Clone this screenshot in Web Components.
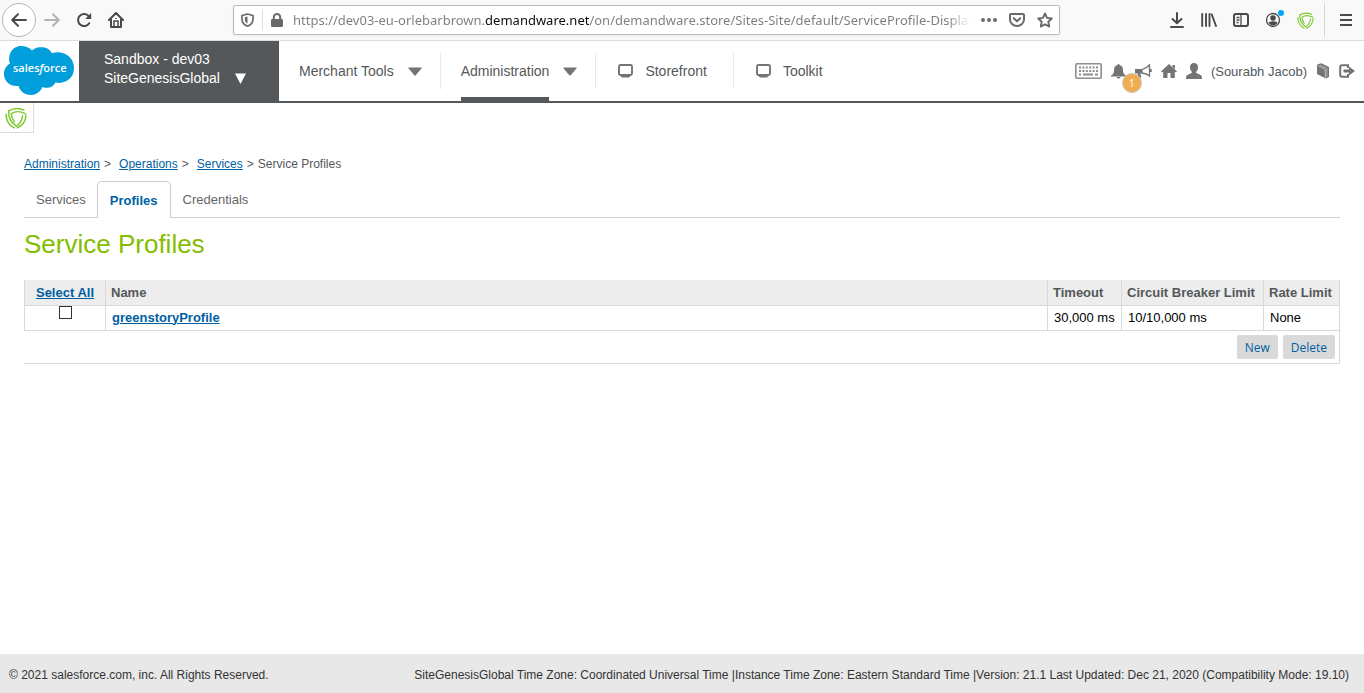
<!DOCTYPE html>
<html lang="en">
<head>
<meta charset="utf-8">
<title>Service Profiles</title>
<style>
body { margin: 0; font-family: "Liberation Sans", Arial, sans-serif; font-size: 13px; color: #54585a; background: #fff; }
</style>
</head>
<body>
<bm-app></bm-app>
<script>
const define = (name, html, setup) => {
  const template = document.createElement('template');
  template.innerHTML = html;
  customElements.define(name, class extends HTMLElement {
    constructor() {
      super();
      this.attachShadow({ mode: 'open' }).append(template.content.cloneNode(true));
    }
    connectedCallback() { if (setup) setup(this, this.shadowRoot); }
  });
};

const shield = '<g fill="none" stroke="#7ac928" stroke-width="1.300" stroke-linecap="round"><path d="M3.200 3.600C8 .8 13 .8 17.200 2.800"/><path d="M3.400 3.800C3 9.500 5.500 14 9.800 17"/><path d="M5.800 6C9.500 3.600 14 3.800 18.200 6"/><path d="M19 7C19 12 16.500 16.500 11.200 19"/><path d="M1 6.500C1 12 3.500 16.500 8.300 19"/><path d="M16 8C15.500 12 13.500 15 10.500 17.500"/><path d="M5.800 6.500C6 9.500 7 11.500 8.500 13.500"/></g>';

/* name: [width, height, viewBox, markup] */
const icons = {
  back: [16, 14, '0 0 16 14', '<path d="M15 7H1.500M7 1.200 1.200 7 7 12.800" fill="none" stroke="currentColor" stroke-width="2" stroke-linecap="round" stroke-linejoin="round"/>'],
  forward: [16, 14, '0 0 16 14', '<path d="M1 7h13.500M9 1.200 14.800 7 9 12.800" fill="none" stroke="currentColor" stroke-width="2" stroke-linecap="round" stroke-linejoin="round"/>'],
  reload: [16, 16, '0 0 16 16', '<path d="M13.200 11.200A6 6 0 1 1 12.300 3.800L14 5.500" fill="none" stroke="currentColor" stroke-width="2" stroke-linecap="round"/><path d="M15.200 1v6H9.200z" fill="currentColor"/>'],
  house: [16, 16, '0 0 16 16', '<path d="M1 8 8 1l7 7M3 7v8h10V7" fill="none" stroke="currentColor" stroke-width="2" stroke-linecap="round" stroke-linejoin="round"/><path d="M6 15V9h4v6M8 6v1" fill="none" stroke="currentColor" stroke-width="1.500"/>'],
  tracking: [13, 14, '0 0 13 14', '<path d="M6.500 1 12 2.500V6c0 3.500-2.200 6-5.500 7.200C3.200 12 1 9.500 1 6V2.500z" fill="none" stroke="currentColor" stroke-width="1.700" stroke-linejoin="round"/><path d="M6.500 3.500v7C4.500 9.500 3.800 8 3.800 6V4.200z" fill="currentColor"/>'],
  lock: [12, 14, '0 0 12 14', '<path d="M2.800 7V4.200a3.200 3.200 0 0 1 6.400 0V7" fill="none" stroke="currentColor" stroke-width="2"/><rect y="6" width="12" height="8" rx="1.200" fill="currentColor"/>'],
  dots: [16, 4, '0 0 16 4', '<g fill="currentColor"><circle cx="2" cy="2" r="2"/><circle cx="8" cy="2" r="2"/><circle cx="14" cy="2" r="2"/></g>'],
  pocket: [16, 14, '0 0 16 14', '<path d="M2 1h12q1 0 1 1v4.500a7 6.500 0 0 1-14 0V2q0-1 1-1z" fill="none" stroke="currentColor" stroke-width="2"/><path d="m4.800 5.200 3.200 3 3.200-3" fill="none" stroke="currentColor" stroke-width="2" stroke-linecap="round" stroke-linejoin="round"/>'],
  star: [16, 16, '0 0 16 16', '<path d="m8 1.500 2 4.400 4.800.6-3.500 3.300.9 4.800L8 12.200l-4.200 2.400.9-4.800L1.200 6.500 6 5.900z" fill="none" stroke="currentColor" stroke-width="1.900" stroke-linejoin="round"/>'],
  download: [14, 16, '0 0 14 16', '<path d="M7 1v10M2.500 7 7 11.300 11.500 7M1 15h12" fill="none" stroke="currentColor" stroke-width="2" stroke-linecap="round" stroke-linejoin="round"/>'],
  library: [16, 14, '0 0 16 14', '<path d="M1.200 1v12M5 1v12M8.500 1v12M10.800 1.500l4.200 11.500" fill="none" stroke="currentColor" stroke-width="1.900" stroke-linecap="round"/>'],
  sidebar: [16, 14, '0 0 16 14', '<rect x="1" y="1" width="14" height="12" rx="2" fill="none" stroke="currentColor" stroke-width="2"/><path d="M8 1v12M3.500 4.500h3M3.500 7h3M3.500 9.500h2" stroke="currentColor" stroke-width="1.300"/>'],
  account: [20, 18, '0 0 20 18', '<circle cx="8" cy="10" r="6.500" fill="none" stroke="currentColor" stroke-width="1.300"/><circle cx="8" cy="8" r="2.800" fill="currentColor"/><path d="M3.500 12.500q4.500-2.500 9 0Q11 15.500 8 15.500t-4.500-3z" fill="currentColor"/><circle cx="16" cy="3" r="3" fill="#00a8f5"/>'],
  menu: [12, 12, '0 0 12 12', '<path d="M0 1h12M0 6h12M0 11h12" stroke="currentColor" stroke-width="2"/>'],
  shield: [17, 17, '0 0 20 20', shield],
  shieldLarge: [22, 22, '0 0 20 20', shield],
  caret: [14, 9, '0 0 14 9', '<path d="M1 .5h12q1 0 .4.900L7.700 8.300q-.7.700-1.400 0L.6 1.400Q0 .5 1 .5z" fill="currentColor"/>'],
  caretWhite: [11, 11, '0 0 11 11', '<path d="M0 .5h11L5.500 11z" fill="#fff"/>'],
  screen: [15, 14, '0 0 15 14', '<rect x="1" y="1" width="13" height="10" rx="1.500" fill="none" stroke="currentColor" stroke-width="1.900"/><path d="M1 10h13l-1.500 2L11 13.500H4L2.500 12z" fill="currentColor"/>'],
  keyboard: [27, 16, '0 0 27 16', '<rect x=".8" y=".8" width="25.400" height="14.400" rx="1" fill="none" stroke="#8e8e8e" stroke-width="1.600"/><path d="M4 4.500h19M4 8h19" stroke="#8e8e8e" stroke-width="2" stroke-dasharray="2 1.400"/><path d="M4 11.500h2M8 11.500h10M20 11.500h3" stroke="#8e8e8e" stroke-width="2"/>'],
  bell: [15, 15, '0 0 15 15', '<path d="M7.500 0c.7 0 1 .4 1 1.100C11 1.700 12 3.600 12 6c0 3 .8 4.500 3 5.500v1H0v-1C2.200 10.500 3 9 3 6c0-2.400 1-4.300 3.500-4.900C6.500.4 6.800 0 7.500 0zM5.500 13h4q-.3 1.500-2 1.500t-2-1.500z" fill="currentColor"/>'],
  horn: [17, 15, '0 0 17 15', '<path d="M0 5h7v4.500H5.200L6.500 13.500l-2.800.5L2.500 9.500H0z" fill="currentColor"/><path d="M7 5.500Q12 4 14.500 1v11Q12 9.500 7 9z" fill="none" stroke="currentColor" stroke-width="1.300"/><path d="M15.800 5v3" stroke="currentColor" stroke-width="1.800"/>'],
  home: [16, 14, '0 0 16 14', '<path d="M8 0 16 7.500 15 8.600l-1.200-1V14H9.500V9h-3v5H2.200V7.600L1 8.600 0 7.500zM11.500 1H14v4l-2.500-2.300z" fill="currentColor"/>'],
  user: [16, 16, '0 0 16 16', '<path d="M8 0c2.700 0 4 1.700 4 4.200C12 6.500 11 8 9.900 9c-.3 1.600 5.300 2 6 4.800V16H.1v-2.200C.8 11 6.400 10.600 6.100 9 5 8 4 6.500 4 4.200 4 1.700 5.300 0 8 0z" fill="currentColor"/>'],
  book: [12, 16, '0 0 12 16', '<path d="M0 2.500Q.2 1.200 1.500 1L4.500.2 12 4v10L8.800 15.500 0 11z" fill="currentColor"/><path d="M1.200 2.700 8.300 6.200v8.500" fill="none" stroke="#d8d8d8" stroke-width=".8"/><path d="M3 2 10 5.300v8.500" fill="none" stroke="#bbb" stroke-width=".7"/>'],
  exit: [16, 14, '0 0 16 14', '<path d="M9 4V1.200H3Q1.200 1.200 1.200 3v8q0 1.800 1.800 1.800h6V10" fill="none" stroke="currentColor" stroke-width="2"/><path d="M4.500 5.500H10V2.500L16 7l-6 4.500v-3H4.500z" fill="currentColor"/>'],
};

define('bm-icon', '<style>:host{display:block;flex:none}svg{display:block}</style>', (el, root) => {
  if (root.querySelector('svg')) return;
  const [w, h, box, body] = icons[el.getAttribute('name')];
  root.innerHTML += `<svg width="${w}" height="${h}" viewBox="${box}" aria-hidden="true">${body}</svg>`;
});

define('browser-toolbar', `
<style>
:host { display: flex; align-items: center; box-sizing: border-box; height: 41px; padding: 0 2px; background: #f9f9fa; border-bottom: 1px solid #dcdcdc; color: #4a4a4b; }
button { display: flex; align-items: center; justify-content: center; flex: none; width: 32px; height: 34px; padding: 0; border: 0; background: none; color: inherit; }
.back { width: 34px; border: 1px solid #b5b5b5; border-radius: 50%; background: #fff; }
.forward { color: #b3b3b4; }
.account { padding-left: 4px; padding-bottom: 2px; }
.url { display: flex; align-items: center; flex: 1; min-width: 0; box-sizing: border-box; height: 30px; margin: 0 101px; padding: 0 0 0 7px; border: 1px solid #b9b9b9; border-radius: 2px; background: #fff; color: #69696a; box-shadow: 0 1px 3px #0000000d; }
.rule { width: 1px; height: 22px; margin: 0 8px; background: #dedede; }
.url button { width: 28px; height: 28px; }
input { flex: 1; min-width: 0; height: 26px; margin: 0 4px 0 10px; padding: 0; border: 0; outline: 0; font: 13px "Noto Sans", sans-serif; color: #7c7c7c; -webkit-text-fill-color: transparent; background: linear-gradient(90deg, #7c7c7c 192px, #0c0c0d 192px 296px, #7c7c7c 296px calc(100% - 24px), #7c7c7c00) text; -webkit-background-clip: text; }
.end { width: 1px; height: 34px; margin: 0 5px 0 3px; background: #d8d8d8; }
</style>
<button class="back" aria-label="Back"><bm-icon name="back"></bm-icon></button>
<button class="forward" aria-label="Forward"><bm-icon name="forward"></bm-icon></button>
<button aria-label="Reload"><bm-icon name="reload"></bm-icon></button>
<button aria-label="Home"><bm-icon name="house"></bm-icon></button>
<div class="url">
  <bm-icon name="tracking"></bm-icon><span class="rule"></span><bm-icon name="lock"></bm-icon>
  <input type="text" aria-label="Address" value="https://dev03-eu-orlebarbrown.demandware.net/on/demandware.store/Sites-Site/default/ServiceProfile-Display">
  <button aria-label="Page actions"><bm-icon name="dots"></bm-icon></button>
  <button aria-label="Save to Pocket"><bm-icon name="pocket"></bm-icon></button>
  <button aria-label="Bookmark"><bm-icon name="star"></bm-icon></button>
</div>
<button aria-label="Downloads"><bm-icon name="download"></bm-icon></button>
<button aria-label="Library"><bm-icon name="library"></bm-icon></button>
<button aria-label="Sidebars"><bm-icon name="sidebar"></bm-icon></button>
<button class="account" aria-label="Account"><bm-icon name="account"></bm-icon></button>
<button aria-label="Green Story"><bm-icon name="shield"></bm-icon></button>
<span class="end"></span>
<button aria-label="Menu"><bm-icon name="menu"></bm-icon></button>
`);

define('sf-logo', `
<style>:host { display: block; flex: none; width: 79px; } svg { display: block; }</style>
<svg width="79" height="60" viewBox="0 0 79 60" role="img" aria-label="salesforce">
<path d="M32 9.500C35 6.800 38.500 6.300 42 6.300c4.500 0 8 2.300 10 6 9-3.300 22 2 22 14.700 0 10.500-9 16.500-18.500 14.500-2.500 5-7.500 6.500-13 4.500-2.500 5.500-7 8-12 8-6 0-10-3.500-12-9C10 46 4 40 4 33c0-5 2.500-8.500 6-10.500C7 14 12.500 5 21 5c5 0 8.500 1.500 11 4.500z" fill="#009edb"/>
<text x="13" y="31" font-family="Open Sans, sans-serif" font-size="11" font-weight="600" fill="#fff">sales<tspan font-style="italic">f</tspan>orce</text>
</svg>
`);

define('nav-item', `
<style>
:host { display: flex; align-items: center; }
a { display: flex; align-items: center; gap: 14px; box-sizing: border-box; height: 36px; padding: 0 18px 0 20px; color: #54585a; font-size: 14px; text-decoration: none; border-right: 1px solid #e8e8e8; }
:host([screen]) a { gap: 12px; padding: 0 26px 0 22px; }
:host([last]) a { border: 0; }
bm-icon { color: #747474; }
.label { position: relative; }
:host([current]) .label::after { content: ""; position: absolute; left: 0; right: 0; bottom: -22px; height: 4px; background: #54585a; }
[name=screen], :host([screen]) [name=caret] { display: none; }
:host([screen]) [name=screen] { display: block; }
</style>
<a href="#"><bm-icon name="screen"></bm-icon><span class="label"><slot></slot></span><bm-icon name="caret"></bm-icon></a>
`);

define('bm-header', `
<style>
:host { display: flex; box-sizing: border-box; height: 62px; border-bottom: 2px solid #54585a; }
.site { display: flex; align-items: flex-end; gap: 15px; box-sizing: border-box; flex: none; width: 200px; padding: 0 0 13px 25px; border: 0; background: #54585a; color: #fff; font: 14px/19px "Liberation Sans", Arial, sans-serif; text-align: left; }
.site bm-icon { padding-bottom: 4px; }
nav { display: flex; flex: 1; }
.tools { display: flex; align-items: center; gap: 9px; padding: 0 9px; color: #747474; }
.tools a { display: block; position: relative; color: inherit; text-decoration: none; }
.tools .name { color: #54585a; }
.book { padding: 0 1px; }
.badge { position: absolute; top: 9px; left: 11px; box-sizing: border-box; width: 20px; height: 20px; border: 1px solid #c8c8c8; border-radius: 50%; background: #f0ad4e; color: #fff; font: 10px/18px "Open Sans", sans-serif; text-align: center; z-index: 1; }
</style>
<sf-logo></sf-logo>
<button class="site"><span>Sandbox - dev03<br>SiteGenesisGlobal</span><bm-icon name="caretWhite"></bm-icon></button>
<nav aria-label="Main">
  <nav-item>Merchant Tools</nav-item>
  <nav-item current>Administration</nav-item>
  <nav-item screen>Storefront</nav-item>
  <nav-item screen last>Toolkit</nav-item>
</nav>
<div class="tools">
  <a href="#" aria-label="Shortcuts"><bm-icon name="keyboard"></bm-icon></a>
  <a href="#" aria-label="Notifications"><bm-icon name="bell"></bm-icon><span class="badge">1</span></a>
  <a href="#" aria-label="Announcements"><bm-icon name="horn"></bm-icon></a>
  <a href="#" aria-label="Home"><bm-icon name="home"></bm-icon></a>
  <a href="#" aria-label="Profile"><bm-icon name="user"></bm-icon></a>
  <a href="#" class="name">(Sourabh Jacob)</a>
  <a href="#" class="book" aria-label="Documentation"><bm-icon name="book"></bm-icon></a>
  <a href="#" aria-label="Log out"><bm-icon name="exit"></bm-icon></a>
</div>
`);

define('extension-tab', `
<style>
:host { display: block; }
button { display: flex; align-items: center; box-sizing: border-box; width: 34px; height: 30px; padding: 0 5px; border: solid #ddd; border-width: 0 1px 1px 0; background: #fff; }
</style>
<button aria-label="Green Story"><bm-icon name="shieldLarge"></bm-icon></button>
`);

define('bread-crumbs', `
<style>
:host { display: block; font-size: 12px; line-height: 16px; }
nav { display: flex; gap: 4px; }
a { color: #005fa3; }
span.wide { padding-right: 4px; }
</style>
<nav aria-label="Breadcrumb"><a href="#">Administration</a><span class="wide">&gt;</span><a href="#">Operations</a><span class="wide">&gt;</span><a href="#">Services</a><span>&gt;</span><span>Service Profiles</span></nav>
`);

define('tab-bar', `
<style>
:host { display: flex; height: 37px; box-shadow: inset 0 -1px #d0d0d0; }
a { box-sizing: border-box; padding: 0 11px 0 12px; color: #666; line-height: 37px; text-decoration: none; }
.on { padding: 0 12px; border: 1px solid #ccc; border-bottom: 0; border-radius: 5px 5px 0 0; background: #fff; color: #005fa3; font-weight: bold; }
</style>
<a href="#">Services</a><a href="#" class="on" aria-current="page">Profiles</a><a href="#">Credentials</a>
`);

define('profile-table', `
<style>
:host { display: block; }
table { width: 100%; border-collapse: separate; border-spacing: 0; border-left: 1px solid #d9d9d9; }
th, td { box-sizing: border-box; height: 25px; padding: 0 5px; border: solid #d9d9d9; border-width: 0 1px 1px 0; white-space: nowrap; text-align: left; }
th { height: 26px; background: #ededed; color: #54585a; }
td { padding: 0 6px 2px; color: #000; }
.pick { width: 81px; text-align: center; }
td.pick { vertical-align: top; line-height: 0; }
.name { width: auto; }
.timeout { width: 74px; }
.breaker { width: 142px; }
.rate { width: 76px; }
a { color: #005fa3; font-weight: bold; }
input { appearance: none; box-sizing: border-box; width: 13px; height: 13px; margin: 0; border: 1px solid #333; background: #fff; }
.actions { display: flex; justify-content: flex-end; gap: 5px; padding: 4px; border: solid #d9d9d9; border-width: 0 1px 1px 0; }
button { height: 24px; padding: 0 8px; border: 0; border-radius: 2px; background: #d9d9d9; color: #005fa3; font: 12px "Open Sans", sans-serif; }
</style>
<table>
<thead><tr><th class="pick"><a href="#">Select All</a></th><th class="name">Name</th><th class="timeout">Timeout</th><th class="breaker">Circuit Breaker Limit</th><th class="rate">Rate Limit</th></tr></thead>
<tbody><tr><td class="pick"><input type="checkbox" aria-label="Select greenstoryProfile"></td><td><a href="#">greenstoryProfile</a></td><td>30,000 ms</td><td>10/10,000 ms</td><td>None</td></tr></tbody>
</table>
<div class="actions"><button>New</button><button>Delete</button></div>
`);

define('bm-footer', `
<style>
:host { display: flex; justify-content: space-between; gap: 16px; padding: 15px 15px 11px 9px; background: #e8e8e8; color: #333; font-size: 12px; line-height: 13px; }
</style>
<span>© 2021 salesforce.com, inc. All Rights Reserved.</span>
<span>SiteGenesisGlobal Time Zone: Coordinated Universal Time |Instance Time Zone: Eastern Standard Time |Version: 21.1 Last Updated: Dec 21, 2020 (Compatibility Mode: 19.10)</span>
`);

define('bm-app', `
<style>
:host { display: flex; flex-direction: column; min-height: 100vh; }
main { flex: 1; padding: 0 24px; }
bread-crumbs { padding: 23px 0 9px; }
h1 { margin: 11px 0 21px; color: #84bd00; font-size: 26px; font-weight: normal; line-height: 30px; }
</style>
<browser-toolbar></browser-toolbar>
<bm-header></bm-header>
<extension-tab></extension-tab>
<main>
  <bread-crumbs></bread-crumbs>
  <tab-bar></tab-bar>
  <h1>Service Profiles</h1>
  <profile-table></profile-table>
</main>
<bm-footer></bm-footer>
`);
</script>
</body>
</html>
